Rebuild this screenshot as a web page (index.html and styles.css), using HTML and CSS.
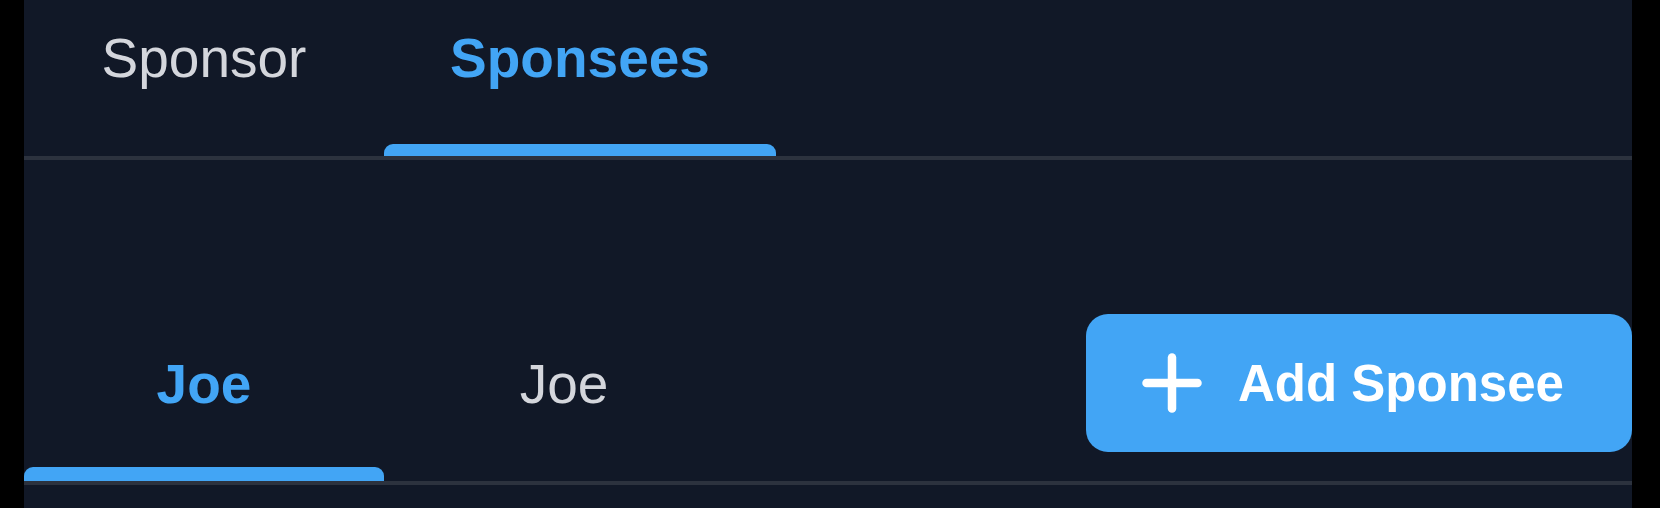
FILE: index.html
```html
<!DOCTYPE html>
<html lang="en">
<head>
<meta charset="utf-8">
<title>Sponsees</title>
<link rel="stylesheet" href="styles.css">
</head>
<body>
<div class="app">
  <nav class="top-tabs">
    <div class="tab tab-sponsor">
      <span class="tab-label">Sponsor</span>
    </div>
    <div class="tab tab-sponsees active">
      <span class="tab-label">Sponsees</span>
      <span class="indicator"></span>
    </div>
  </nav>

  <div class="sub-row">
    <div class="sub-tabs">
      <div class="sub-tab active">
        <span class="tab-label">Joe</span>
        <span class="indicator sub-indicator"></span>
      </div>
      <div class="sub-tab">
        <span class="tab-label">Joe</span>
      </div>
    </div>
    <button class="add-btn" type="button">
      <svg class="plus" width="60" height="60" viewBox="0 0 60 60" aria-hidden="true">
        <line x1="30" y1="4.5" x2="30" y2="55.5" />
        <line x1="4.5" y1="30" x2="55.5" y2="30" />
      </svg>
      <span>Add Sponsee</span>
    </button>
  </div>
</div>
</body>
</html>
```

FILE: styles.css
```css
* { box-sizing: border-box; }

html, body {
  margin: 0;
  padding: 0;
  background: #000;
  height: 100%;
}

body {
  font-family: "Liberation Sans", Arial, Helvetica, sans-serif;
}

.app {
  margin: 0 28px 0 24px;
  width: 1608px;
  height: 508px;
  background: #111827;
  overflow: hidden;
}

.top-tabs {
  display: flex;
  height: 160px;
  border-bottom: 4px solid #2c323e;
}

.tab {
  display: flex;
  flex-direction: column;
  align-items: center;
  height: 156px;
  padding-top: 31px;
}

.tab-sponsor { width: 360px; }
.tab-sponsees { width: 392px; }

.tab-label {
  font-size: 55px;
  line-height: 55px;
  color: #d4d6dc;
  flex: 1;
}

.active .tab-label {
  color: #42a5f5;
  font-weight: 700;
}

.indicator {
  align-self: stretch;
  height: 12px;
  background: #42a5f5;
  border-radius: 9px 9px 0 0;
}

.sub-row {
  margin-top: 154px;
  display: flex;
  justify-content: space-between;
  align-items: flex-start;
  border-bottom: 4px solid #2c323e;
}

.sub-tabs {
  display: flex;
}

.sub-tab {
  width: 360px;
  height: 167px;
  display: flex;
  flex-direction: column;
  align-items: center;
  padding-top: 43px;
}

.sub-indicator {
  height: 14px;
}

.add-btn {
  width: 546px;
  height: 138px;
  border: none;
  border-radius: 22px;
  background: #42a5f5;
  color: #fff;
  display: flex;
  align-items: center;
  justify-content: flex-start;
  gap: 36px;
  padding: 0 0 0 56px;
  font-family: "Liberation Sans", Arial, Helvetica, sans-serif;
  font-size: 51px;
  font-weight: 700;
  cursor: pointer;
}

.plus {
  flex: none;
}

.plus line {
  stroke: #fff;
  stroke-width: 8.5;
  stroke-linecap: round;
}
```
